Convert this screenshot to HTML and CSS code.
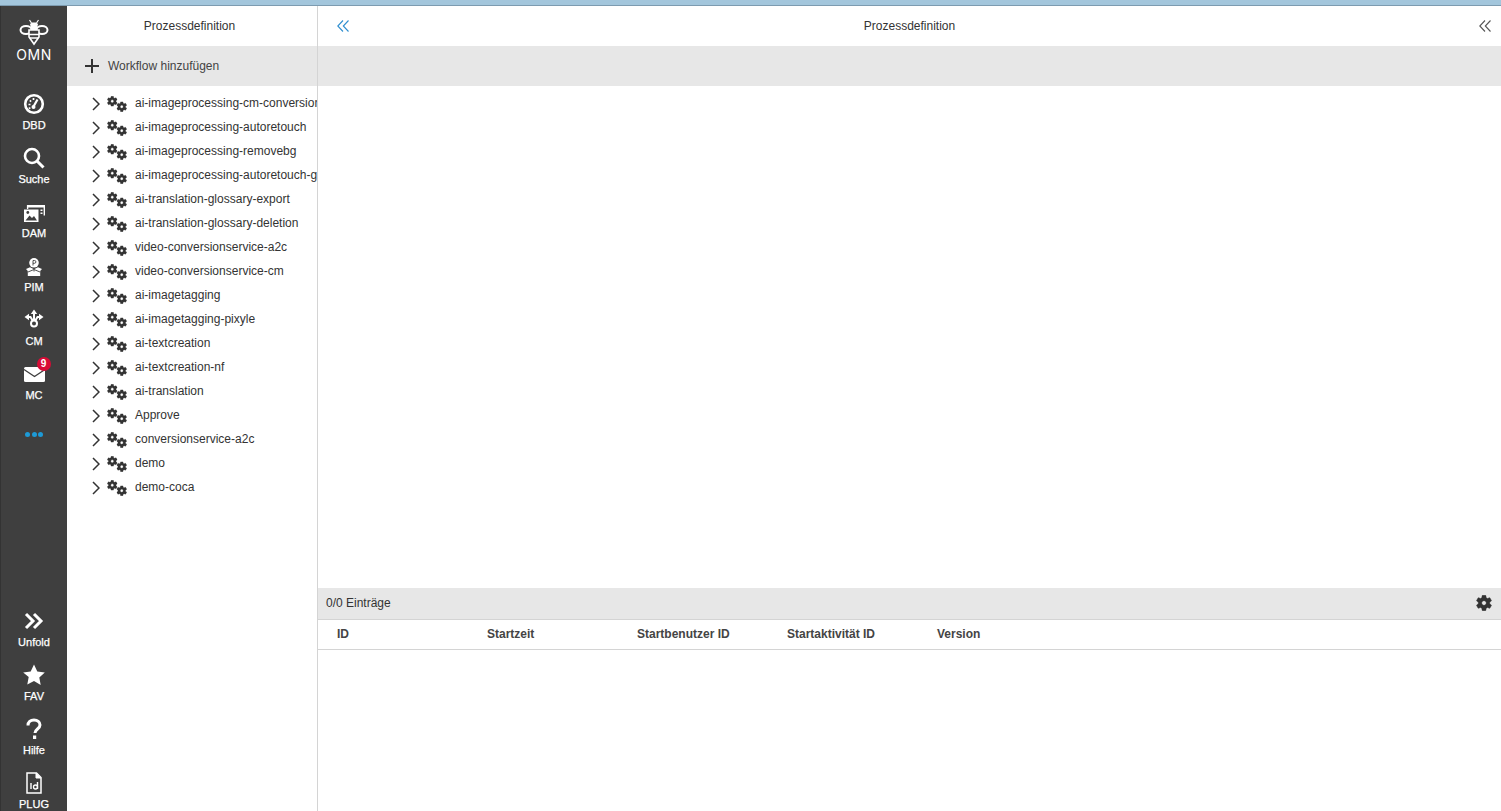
FILE: index.html
```html
<!DOCTYPE html>
<html lang="de">
<head>
<meta charset="utf-8">
<title>Prozessdefinition</title>
<link rel="stylesheet" href="styles.css">
</head>
<body>
<svg class="defs" width="0" height="0" aria-hidden="true">
  <symbol id="gear" viewBox="2 2 20 20"><path fill-rule="evenodd" d="M19.14 12.94c.04-.3.06-.61.06-.94 0-.32-.02-.64-.07-.94l2.03-1.58c.18-.14.23-.41.12-.61l-1.92-3.32c-.12-.22-.37-.29-.59-.22l-2.39.96c-.5-.38-1.03-.7-1.62-.94l-.36-2.54c-.04-.24-.24-.41-.48-.41h-3.84c-.24 0-.43.17-.47.41l-.36 2.54c-.59.24-1.13.57-1.62.94l-2.39-.96c-.22-.08-.47 0-.59.22L2.74 8.87c-.12.21-.08.47.12.61l2.03 1.58c-.05.3-.09.63-.09.94s.02.64.07.94l-2.03 1.58c-.18.14-.23.41-.12.61l1.92 3.32c.12.22.37.29.59.22l2.39-.96c.5.38 1.03.7 1.62.94l.36 2.54c.05.24.24.41.48.41h3.84c.24 0 .44-.17.47-.41l.36-2.54c.59-.24 1.13-.56 1.62-.94l2.39.96c.22.08.47 0 .59-.22l1.92-3.32c.12-.22.07-.47-.12-.61l-2.01-1.58zM12 14.800c-1.55 0-2.800-1.25-2.800-2.800s1.25-2.800 2.800-2.800 2.800 1.25 2.800 2.800-1.25 2.800-2.800 2.800z"/></symbol>
  <symbol id="gears" viewBox="0 0 20 17"><use href="#gear" x="0" y="0" width="10.500" height="10.500"/><use href="#gear" x="9.500" y="5.500" width="10.500" height="10.500"/></symbol>
  <symbol id="chev" viewBox="0 0 8 14"><path d="M1 1l6 6-6 6" fill="none" stroke="currentColor" stroke-width="1.500"/></symbol>
  <symbol id="dchev" viewBox="0 0 12 12"><path d="M6 .5L.8 6 6 11.500M11.500 .5L6.300 6l5.200 5.500" fill="none" stroke="currentColor" stroke-width="1.100"/></symbol>
</svg>
<div class="topbar"></div>
<div class="app">
  <nav class="rail">
    <div class="rail-top">
      <div class="logo">
        <svg class="logo-bee" viewBox="0 0 30 27" width="30" height="27">
          <g fill="none" stroke="#fff" stroke-width="2">
            <ellipse cx="7" cy="11" rx="5.500" ry="4"/>
            <ellipse cx="23" cy="11" rx="5.500" ry="4"/>
            <path d="M10 11h10v7l-5 7-5-7z" fill="#3f3f3f" stroke-width="1.600"/>
            <path d="M10 15.500h10M11 19h8" stroke-width="1.500"/>
          </g>
          <path d="M11 5l2-1.500h4L19 5l-1.500 6h-5z" fill="#fff"/>
          <path d="M12.500 4L10.500 1M17.500 4l2-3" stroke="#fff" stroke-width="1.200"/>
        </svg>
        <span class="logo-text">OMN</span>
      </div>
      <a class="item">
        <svg class="ico" viewBox="0 0 22 22" width="22" height="22"><circle cx="11" cy="11" r="8.800" fill="none" stroke="#fff" stroke-width="2.600"/><path d="M10.500 13.500L14.500 6.500" stroke="#fff" stroke-width="2.200"/><circle cx="10.500" cy="14" r="2" fill="#fff"/><path d="M5.500 11.500h2M6.800 7.300l1.300 1.300M10.500 5v2M5.800 15.500l1.600-.8" stroke="#fff" stroke-width="1.700"/></svg>
        <span>DBD</span>
      </a>
      <a class="item">
        <svg class="ico" viewBox="0 0 22 22" width="22" height="22"><circle cx="9" cy="9" r="7" fill="none" stroke="#fff" stroke-width="2.600"/><path d="M14 14l6.500 6.500" stroke="#fff" stroke-width="3"/></svg>
        <span>Suche</span>
      </a>
      <a class="item">
        <svg class="ico" viewBox="0 0 22 22" width="22" height="22"><path d="M4 4h18v2.500H4z" fill="#fff"/><path d="M4.600 4v4M21.300 4v10.500" fill="none" stroke="#fff" stroke-width="1.400"/><path d="M17.500 8.500h2v1.500h-2zM17.500 11.500h2v1.500h-2z" fill="#fff"/><path d="M1 8.500h14.500V21H1z" fill="#fff"/><path d="M2.500 19.500l4-5 2.500 2.500 2-2 3 4.500z" fill="#3f3f3f"/><circle cx="4.800" cy="11.500" r="1.400" fill="#3f3f3f"/></svg>
        <span>DAM</span>
      </a>
      <a class="item">
        <svg class="ico" viewBox="0 0 22 22" width="22" height="22"><circle cx="11" cy="7.800" r="4.800" fill="#fff"/><path d="M10 10.500V5.500h1.500a1.300 1.300 0 010 2.800H10" fill="none" stroke="#3f3f3f" stroke-width=".9"/><path d="M3 14l4-1.800 4 2 4-2 4 1.800-1.800 2v5H4.800v-5z" fill="#fff"/><path d="M5 17l6-2.500 6 2.500M11 14.500v2" fill="none" stroke="#3f3f3f" stroke-width=".9"/></svg>
        <span>PIM</span>
      </a>
      <a class="item">
        <svg class="ico" viewBox="0 0 22 22" width="22" height="22"><path d="M11 .5l3.200 4.500H7.800zM1.500 8l4.500-3.200v6.400zM20.500 8L16 4.800v6.400z" fill="#fff"/><path d="M11 4v8M5 8h2.500l2.500 4M17 8h-2.500L12 12" stroke="#fff" stroke-width="2" fill="none"/><circle cx="11" cy="14.500" r="3" fill="#3f3f3f" stroke="#fff" stroke-width="2"/></svg>
        <span>CM</span>
      </a>
      <a class="item">
        <span class="mail">
          <svg class="ico" viewBox="0 0 21 15" width="21" height="15"><rect width="21" height="15" rx="1.500" fill="#fff"/><path d="M0 2.500l10.500 7 10.500-7" fill="none" stroke="#3f3f3f" stroke-width="1.300"/></svg>
          <b class="badge">9</b>
        </span>
        <span>MC</span>
      </a>
      <div class="dots"><i></i><i></i><i></i></div>
    </div>
    <div class="rail-foot">
      <a class="item">
        <svg class="ico" viewBox="0 0 22 22" width="22" height="22"><path d="M3 4l7 7-7 7M11 4l7 7-7 7" fill="none" stroke="#fff" stroke-width="3"/></svg>
        <span>Unfold</span>
      </a>
      <a class="item">
        <svg class="ico" viewBox="0 0 22 22" width="22" height="22"><path d="M11 .5l3.300 6.900 7.500 1-5.500 5.200 1.400 7.500L11 17l-6.700 3.600 1.400-7.500L.2 8.400l7.500-1z" fill="#fff"/></svg>
        <span>FAV</span>
      </a>
      <a class="item">
        <svg class="ico" viewBox="0 0 22 22" width="22" height="22"><path d="M5 7.500C5 4 7.500 2 11 2s6 2 6 5c0 4-5 4-5 8" fill="none" stroke="#fff" stroke-width="3"/><rect x="10" y="17.500" width="3.200" height="3.500" fill="#fff"/></svg>
        <span>Hilfe</span>
      </a>
      <a class="item">
        <svg class="ico" viewBox="0 0 22 22" width="22" height="22"><path d="M4 1h9.500L18 5.500V21H4z" fill="none" stroke="#fff" stroke-width="1.500"/><path d="M13 1v5h5" fill="#fff" stroke="#fff"/><path d="M8 11v6M14.500 10v7" stroke="#fff" stroke-width="1.400"/><circle cx="12.500" cy="15" r="2" fill="none" stroke="#fff" stroke-width="1.300"/></svg>
        <span>PLUG</span>
      </a>
    </div>
  </nav>
  <aside class="side">
    <header class="pane-head">Prozessdefinition</header>
    <div class="toolbar">
      <svg class="plus" viewBox="0 0 14 14" width="14" height="14"><path d="M7 0v14M0 7h14" stroke="#333" stroke-width="2"/></svg>
      <span>Workflow hinzufügen</span>
    </div>
    <ul class="tree">
      <li><svg class="chev"><use href="#chev"/></svg><svg class="gears"><use href="#gears"/></svg><span>ai-imageprocessing-cm-conversionservice</span></li>
      <li><svg class="chev"><use href="#chev"/></svg><svg class="gears"><use href="#gears"/></svg><span>ai-imageprocessing-autoretouch</span></li>
      <li><svg class="chev"><use href="#chev"/></svg><svg class="gears"><use href="#gears"/></svg><span>ai-imageprocessing-removebg</span></li>
      <li><svg class="chev"><use href="#chev"/></svg><svg class="gears"><use href="#gears"/></svg><span>ai-imageprocessing-autoretouch-glossary</span></li>
      <li><svg class="chev"><use href="#chev"/></svg><svg class="gears"><use href="#gears"/></svg><span>ai-translation-glossary-export</span></li>
      <li><svg class="chev"><use href="#chev"/></svg><svg class="gears"><use href="#gears"/></svg><span>ai-translation-glossary-deletion</span></li>
      <li><svg class="chev"><use href="#chev"/></svg><svg class="gears"><use href="#gears"/></svg><span>video-conversionservice-a2c</span></li>
      <li><svg class="chev"><use href="#chev"/></svg><svg class="gears"><use href="#gears"/></svg><span>video-conversionservice-cm</span></li>
      <li><svg class="chev"><use href="#chev"/></svg><svg class="gears"><use href="#gears"/></svg><span>ai-imagetagging</span></li>
      <li><svg class="chev"><use href="#chev"/></svg><svg class="gears"><use href="#gears"/></svg><span>ai-imagetagging-pixyle</span></li>
      <li><svg class="chev"><use href="#chev"/></svg><svg class="gears"><use href="#gears"/></svg><span>ai-textcreation</span></li>
      <li><svg class="chev"><use href="#chev"/></svg><svg class="gears"><use href="#gears"/></svg><span>ai-textcreation-nf</span></li>
      <li><svg class="chev"><use href="#chev"/></svg><svg class="gears"><use href="#gears"/></svg><span>ai-translation</span></li>
      <li><svg class="chev"><use href="#chev"/></svg><svg class="gears"><use href="#gears"/></svg><span>Approve</span></li>
      <li><svg class="chev"><use href="#chev"/></svg><svg class="gears"><use href="#gears"/></svg><span>conversionservice-a2c</span></li>
      <li><svg class="chev"><use href="#chev"/></svg><svg class="gears"><use href="#gears"/></svg><span>demo</span></li>
      <li><svg class="chev"><use href="#chev"/></svg><svg class="gears"><use href="#gears"/></svg><span>demo-coca</span></li>
    </ul>
  </aside>
  <main class="main">
    <header class="main-head">
      <svg class="dchev blue"><use href="#dchev"/></svg>
      <span>Prozessdefinition</span>
      <svg class="dchev grey"><use href="#dchev"/></svg>
    </header>
    <div class="main-bar"></div>
    <div class="main-body"></div>
    <div class="count-bar">
      <span>0/0 Einträge</span>
      <svg class="cog"><use href="#gear"/></svg>
    </div>
    <div class="cols">
      <span>ID</span><span>Startzeit</span><span>Startbenutzer ID</span><span>Startaktivität ID</span><span>Version</span>
    </div>
    <div class="rows"></div>
  </main>
</div>
</body>
</html>
```
FILE: styles.css
```css
* { box-sizing: border-box; }
html, body { height: 100%; }
body {
  margin: 0;
  overflow: hidden;
  display: flex;
  flex-direction: column;
  font-family: "Liberation Sans", Arial, sans-serif;
  font-size: 12px;
  color: #333;
  background: #fff;
}
.defs { position: absolute; }
.topbar {
  height: 6px;
  flex: none;
  background: #a3c6dc;
  border-bottom: 1px solid #7d9bb0;
}
.app { flex: 1; min-height: 0; display: flex; }

.rail {
  width: 67px;
  flex: none;
  display: flex;
  flex-direction: column;
  justify-content: space-between;
  background: #3f3f3f;
  border-left: 1px solid #333;
  color: #fff;
}
.rail-foot { margin-bottom: -12px; }
.logo {
  height: 84px;
  display: flex;
  flex-direction: column;
  align-items: center;
  padding-top: 13px;
}
.logo-text { font-size: 14px; font-weight: 400; letter-spacing: 0.6px; line-height: 16px; margin-top: 1px; font-family: "Inter", "Liberation Sans", sans-serif; }
.item {
  height: 54px;
  display: flex;
  flex-direction: column;
  align-items: center;
  padding-top: 3px;
  font-size: 11px;
  font-weight: 400;
  -webkit-text-stroke: 0.25px #fff;
  line-height: 14px;
}
.ico { display: block; height: 22px; flex: none; margin-bottom: 3px; }
.mail { position: relative; height: 22px; margin-bottom: 3px; display: flex; align-items: flex-end; }
.mail .ico { height: 15px; margin: 0 0 3px; }
.badge {
  position: absolute;
  left: 13px;
  top: -6px;
  width: 14px;
  height: 14px;
  border-radius: 50%;
  background: #d80c36;
  color: #fff;
  font-size: 10px;
  line-height: 14px;
  text-align: center;
  -webkit-text-stroke: 0;
}
.dots { display: flex; justify-content: center; gap: 1.500px; padding-top: 18px; }
.dots i { width: 5px; height: 5px; border-radius: 50%; background: #1d9ad6; }

.side {
  width: 251px;
  flex: none;
  border-right: 1px solid #d4d4d4;
  overflow: hidden;
  display: flex;
  flex-direction: column;
}
.pane-head {
  height: 40px;
  flex: none;
  display: flex;
  align-items: center;
  justify-content: center;
  padding-right: 5px;
}
.toolbar {
  height: 40px;
  flex: none;
  display: flex;
  align-items: center;
  gap: 9px;
  padding-left: 18px;
  background: #e7e7e7;
  color: #444;
}
.plus { flex: none; }
.tree { list-style: none; margin: 0; padding: 5px 0 0; }
.tree li {
  height: 24px;
  display: flex;
  align-items: center;
  padding-left: 25px;
  white-space: nowrap;
}
.chev { width: 8px; height: 14px; flex: none; color: #333; margin-top: 1px; }
.gears { width: 20px; height: 17px; flex: none; margin: 3px 8px 0 7px; fill: #333; stroke: #333; stroke-width: .5px; }

.main { flex: 1; min-width: 0; display: flex; flex-direction: column; }
.main-head {
  height: 40px;
  flex: none;
  display: grid;
  grid-template-columns: 1fr auto 1fr;
  align-items: center;
  padding: 0 10px;
}
.dchev { width: 12px; height: 12px; }
.blue { color: #2f8fd0; margin-left: 9px; }
.grey { color: #555; justify-self: end; }
.main-bar { height: 40px; flex: none; background: #e7e7e7; }
.main-body { flex: 1; }
.count-bar {
  height: 32px;
  flex: none;
  display: flex;
  align-items: center;
  justify-content: space-between;
  padding: 0 9px 1px 8px;
  background: #e7e7e7;
  border-bottom: 1px solid #d4d4d4;
}
.cog { width: 16px; height: 16px; fill: #333; stroke: #333; stroke-width: .5px; }
.cols {
  height: 30px;
  flex: none;
  display: grid;
  grid-template-columns: repeat(5, 150px);
  align-items: center;
  padding: 0 0 1px 19px;
  border-bottom: 1px solid #d4d4d4;
  font-weight: 700;
  color: #444;
}
.rows { height: 161px; flex: none; }
```
